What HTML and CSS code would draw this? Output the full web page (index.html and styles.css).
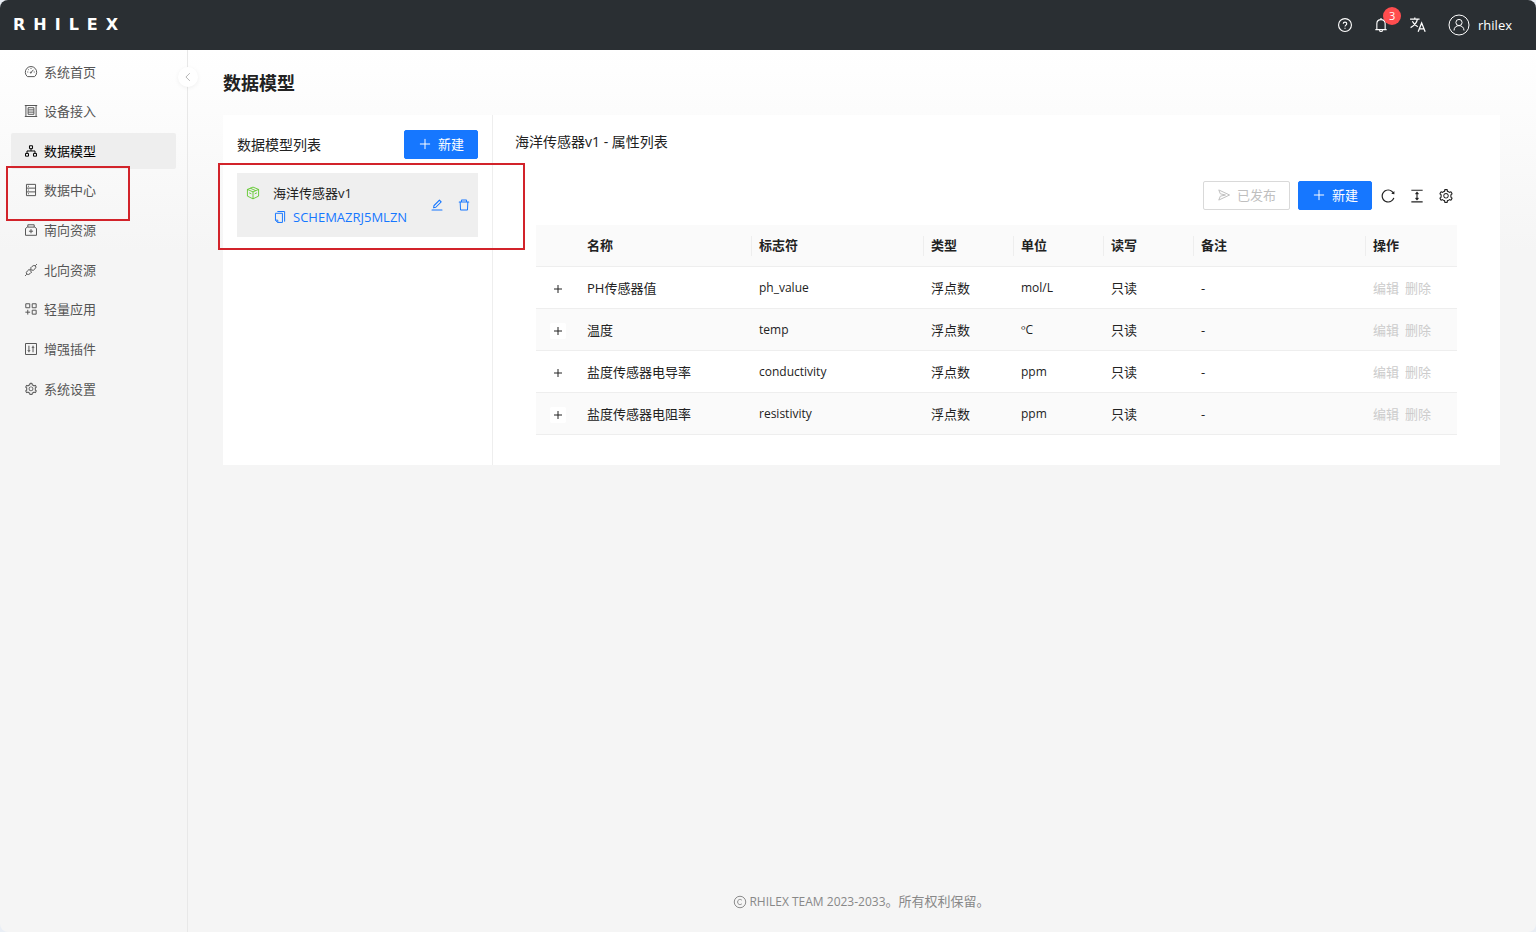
FILE: index.html
```html
<!DOCTYPE html>
<html lang="zh-CN">
<head>
<meta charset="utf-8">
<title>数据模型 - RHILEX</title>
<link rel="stylesheet" href="styles.css">
</head>
<body>
<svg class="sprite" viewBox="0 0 1024 1024" aria-hidden="true">
  <symbol id="gear" viewBox="0 0 1024 1024"><path fill="currentColor" stroke="none" d="M924.8 625.7l-65.5-56c3.1-19 4.7-38.4 4.7-57.8s-1.6-38.8-4.7-57.8l65.5-56a32.03 32.03 0 009.3-35.2l-.9-2.6a443.74 443.74 0 00-79.7-137.9l-1.8-2.1a32.12 32.12 0 00-35.1-9.5l-81.3 28.9c-30-24.6-63.5-44-99.7-57.6l-15.7-85a32.05 32.05 0 00-25.8-25.7l-2.7-.5c-52.1-9.4-106.9-9.4-159 0l-2.7.5a32.05 32.05 0 00-25.8 25.7l-15.8 85.4a351.86 351.86 0 00-99 57.4l-81.9-29.1a32 32 0 00-35.1 9.5l-1.8 2.1a446.02 446.02 0 00-79.7 137.9l-.9 2.6c-4.5 12.5-.8 26.5 9.3 35.2l66.3 56.6c-3.1 18.8-4.6 38-4.6 57.1 0 19.2 1.5 38.4 4.6 57.1L99 625.5a32.03 32.03 0 00-9.3 35.2l.9 2.6c18.1 50.4 44.9 96.9 79.7 137.9l1.8 2.1a32.12 32.12 0 0035.1 9.5l81.9-29.1c29.8 24.5 63.1 43.9 99 57.4l15.8 85.4a32.05 32.05 0 0025.8 25.7l2.7.5a449.4 449.4 0 00159 0l2.7-.5a32.05 32.05 0 0025.8-25.7l15.7-85a350 350 0 0099.7-57.6l81.3 28.9a32 32 0 0035.1-9.5l1.8-2.1c34.8-41.1 61.6-87.5 79.7-137.9l.9-2.6c4.5-12.3.8-26.3-9.3-35zM788.3 465.9c2.5 15.1 3.8 30.6 3.8 46.1s-1.3 31-3.8 46.1l-6.6 40.1 74.7 63.9a370.03 370.03 0 01-42.6 73.6L721 702.8l-31.4 25.8c-23.9 19.6-50.5 35-79.3 45.8l-38.1 14.3-17.9 97a377.5 377.5 0 01-85 0l-17.9-97.2-37.8-14.5c-28.5-10.8-55-26.2-78.7-45.7l-31.4-25.9-93.4 33.2c-17-22.9-31.2-47.6-42.6-73.6l75.5-64.5-6.5-40c-2.4-14.9-3.7-30.3-3.7-45.5 0-15.3 1.2-30.6 3.7-45.5l6.5-40-75.5-64.5c11.3-26.1 25.6-50.7 42.6-73.6l93.4 33.2 31.4-25.9c23.7-19.5 50.2-34.9 78.7-45.7l37.9-14.3 17.9-97.2c28.1-3.2 56.8-3.2 85 0l17.9 97 38.1 14.3c28.7 10.8 55.4 26.2 79.3 45.8l31.4 25.8 92.8-32.9c17 22.9 31.2 47.6 42.6 73.6L781.8 426l6.5 39.9zM512 326c-97.2 0-176 78.8-176 176s78.8 176 176 176 176-78.8 176-176-78.8-176-176-176zm79.2 255.2A111.6 111.6 0 01512 614c-29.9 0-58-11.7-79.2-32.8A111.6 111.6 0 01400 502c0-29.9 11.7-58 32.8-79.2C454 401.6 482.1 390 512 390c29.9 0 58 11.6 79.2 32.8A111.6 111.6 0 01624 502c0 29.9-11.7 58-32.8 79.2z"/></symbol>
  <symbol id="plus" viewBox="0 0 1024 1024"><path d="M512 140V884M140 512H884"/></symbol>
</svg>

<div class="app">
  <header class="topbar">
    <a class="brand" href="#">RHILEX</a>
    <div class="tools">
      <button class="tool" aria-label="帮助"><svg class="icon i16" viewBox="0 0 1024 1024"><circle cx="512" cy="512" r="412"/><path d="M400 430c0-140 224-140 224 0c0 90-112 90-112 180M512 680v70"/></svg></button>
      <button class="tool bell" aria-label="通知"><svg class="icon i16" viewBox="0 0 1024 1024"><path d="M512 70v90M246 800V430c0-350 532-350 532 0v370M150 805H874M420 840c0 120 184 120 184 0"/></svg><span class="badge">3</span></button>
      <button class="tool" aria-label="语言"><svg class="icon i18" viewBox="0 0 1024 1024"><path d="M60 180H600M330 80v100M480 180C440 380 290 560 90 660M190 300C270 460 370 560 500 610M520 900L720 400L920 900M590 730H850"/></svg></button>
      <button class="tool user"><svg class="icon avatar" viewBox="0 0 22 22"><circle cx="11" cy="11" r="10"/><circle cx="11" cy="8.5" r="3.1"/><path d="M6 16.5c0-6.5 10-6.5 10 0"/></svg><span>rhilex</span></button>
    </div>
  </header>

  <div class="body">
    <aside class="sidebar">
      <nav class="menu">
        <a href="#"><svg class="icon i14" viewBox="0 0 1024 1024"><path d="M250 850A415 415 0 1 1 774 850ZM512 220v70M240 512h70M714 512h70M310 320l50 50M500 560L690 350"/><circle cx="500" cy="560" r="40"/></svg>系统首页</a>
        <a href="#"><svg class="icon i14" viewBox="0 0 1024 1024"><path d="M60 110H964M60 914H964M140 110V914M884 110V914M300 270H724V754H300ZM300 430H724M300 594H724"/></svg>设备接入</a>
        <a href="#" class="active"><svg class="icon i14" viewBox="0 0 1024 1024"><path d="M400 130H624V340H400ZM110 690H330V890H110ZM694 690H914V890H694ZM512 340V500M220 690V510H804V690"/></svg>数据模型</a>
        <a href="#"><svg class="icon i14" viewBox="0 0 1024 1024"><path d="M180 100H844V924H180ZM180 375H844M180 650H844M290 240h70M290 515h70M290 785h70"/></svg>数据中心</a>
        <a href="#"><svg class="icon i14" viewBox="0 0 1024 1024"><path d="M110 900V400L240 300H784L914 400V900ZM280 300V130H744V300M512 450V750M362 600H662"/></svg>南向资源</a>
        <a href="#"><svg class="icon i14" viewBox="0 0 1024 1024"><path d="M80 944L200 824M824 200L944 80M470 370L590 250Q720 120 850 220Q910 350 780 440L660 560ZM370 470L560 660L440 780Q310 900 190 800Q120 700 240 590ZM420 520L500 440M510 610L590 530"/></svg>北向资源</a>
        <a href="#"><svg class="icon i14" viewBox="0 0 1024 1024"><path d="M130 130H420V420H130ZM600 130H890V420H600ZM600 600H890V890H600ZM275 570V920M100 745H450"/></svg>轻量应用</a>
        <a href="#"><svg class="icon i14" viewBox="0 0 1024 1024"><path d="M110 110H914V914H110ZM360 270V750M270 590L360 680L450 590M660 270V750M570 440L660 350L750 440"/></svg>增强插件</a>
        <a href="#"><svg class="icon i14" viewBox="0 0 1024 1024"><use href="#gear"/></svg>系统设置</a>
      </nav>
      <button class="collapse" aria-label="收起菜单"><svg class="icon i10" viewBox="0 0 1024 1024"><path d="M700 120L300 512L700 904"/></svg></button>
    </aside>

    <main class="content">
      <h1>数据模型</h1>
      <div class="panels">
        <section class="models">
          <div class="models-head">
            <h2>数据模型列表</h2>
            <button class="btn primary"><svg class="icon i14" viewBox="0 0 1024 1024"><use href="#plus"/></svg>新建</button>
          </div>
          <div class="model">
            <svg class="icon i14 cube" viewBox="0 0 1024 1024"><path d="M512 80L920 250V740L512 940L104 740V250ZM104 250L512 430L920 250M512 430V940M310 160L710 340M230 500L390 570M640 570L800 500"/></svg>
            <div class="model-text">
              <span>海洋传感器v1</span>
              <button class="link"><svg class="icon i14" viewBox="0 0 1024 1024"><path d="M320 110H850V850M180 240H690V910H340L180 760ZM180 740H350V910"/></svg>SCHEMAZRJ5MLZN</button>
            </div>
            <div class="model-actions">
              <button class="link" aria-label="编辑模型"><svg class="icon i14" viewBox="0 0 1024 1024"><path class="solid" d="M257.7 752c2 0 4-.2 6-.5L431.9 722c2-.4 3.9-1.3 5.3-2.8l423.9-423.9a9.96 9.96 0 000-14.1L694.9 114.9c-1.9-1.9-4.4-2.9-7.1-2.9s-5.2 1-7.1 2.9L256.8 538.8c-1.5 1.5-2.4 3.3-2.8 5.3l-29.5 168.2a33.5 33.5 0 009.4 29.8c6.6 6.4 14.9 9.9 23.8 9.9zm67.4-174.4L687.8 215l73.3 73.3-362.7 362.6-88.9 15.7 15.6-89zM880 836H144c-17.7 0-32 14.3-32 32v36c0 4.4 3.6 8 8 8h784c4.4 0 8-3.6 8-8v-36c0-17.7-14.3-32-32-32z"/></svg></button>
              <button class="link" aria-label="删除模型"><svg class="icon i14" viewBox="0 0 1024 1024"><path class="solid" d="M360 184h304v72h72v-80c0-35.3-28.7-64-64-64H352c-35.3 0-64 28.7-64 64v80h72v-72zm504 72H160c-17.7 0-32 14.3-32 32v32c0 4.4 3.6 8 8 8h60.4l24.7 523c1.6 34.1 29.8 61 63.9 61h454c34.2 0 62.3-26.8 63.9-61l24.7-523H888c4.4 0 8-3.6 8-8v-32c0-17.7-14.3-32-32-32zM731.3 840H292.7l-24.2-512h487l-24.2 512z"/></svg></button>
            </div>
          </div>
        </section>

        <section class="props">
          <h2>海洋传感器v1 - 属性列表</h2>
          <div class="toolbar">
            <button class="btn" disabled><svg class="icon i14" viewBox="0 0 1024 1024"><path d="M130 140L920 512L130 884L240 600L620 512L240 424Z"/></svg>已发布</button>
            <button class="btn primary"><svg class="icon i14" viewBox="0 0 1024 1024"><use href="#plus"/></svg>新建</button>
            <button class="tool-dark" aria-label="刷新"><svg class="icon i16" viewBox="0 0 1024 1024"><path class="solid" d="M909.1 209.3l-56.4 44.1C775.8 155.1 656.2 92 521.9 92 290 92 102.3 279.5 102 511.5 101.7 743.7 289.8 932 521.9 932c181.3 0 335.8-115 394.6-276.1 1.5-4.2-.7-8.9-4.9-10.3l-56.7-19.5a8 8 0 00-10.1 4.8c-1.8 5-3.8 10-5.9 14.9-17.3 41-42.1 77.8-73.7 109.4A344.77 344.77 0 01655.9 829c-42.3 17.9-87.4 27-133.8 27-46.5 0-91.5-9.1-133.8-27A341.5 341.5 0 01279 755.2a342.16 342.16 0 01-73.7-109.4c-17.9-42.4-27-87.4-27-133.9s9.1-91.5 27-133.9c17.3-41 42.1-77.8 73.7-109.4 31.6-31.6 68.4-56.4 109.3-73.8 42.3-17.9 87.4-27 133.8-27 46.5 0 91.5 9.1 133.8 27a341.5 341.5 0 01109.3 73.8c9.9 9.9 19.2 20.4 27.8 31.4l-60.2 47a8 8 0 003 14.1l175.6 43c5 1.2 9.9-2.6 9.9-7.7l.8-180.9c-.1-6.6-7.8-10.3-13-6.2z"/></svg></button>
            <button class="tool-dark" aria-label="密度"><svg class="icon i16" viewBox="0 0 1024 1024"><path d="M150 140H874M150 884H874M512 300V724M420 385L512 285L604 385M420 640L512 740L604 640"/></svg></button>
            <button class="tool-dark" aria-label="列设置"><svg class="icon i16" viewBox="0 0 1024 1024"><use href="#gear"/></svg></button>
          </div>
          <table>
            <colgroup><col class="c-exp"><col><col><col class="c-s"><col class="c-s"><col class="c-s"><col><col class="c-op"></colgroup>
            <thead>
              <tr><th></th><th>名称</th><th>标志符</th><th>类型</th><th>单位</th><th>读写</th><th>备注</th><th>操作</th></tr>
            </thead>
            <tbody>
              <tr><td><button class="expand" aria-label="展开"><svg class="icon i10" viewBox="0 0 10 10"><path d="M5 1V9M1 5H9"/></svg></button></td><td>PH传感器值</td><td class="latin">ph_value</td><td>浮点数</td><td class="latin">mol/L</td><td>只读</td><td>-</td><td><button class="off" disabled>编辑</button><button class="off" disabled>删除</button></td></tr>
              <tr><td><button class="expand" aria-label="展开"><svg class="icon i10" viewBox="0 0 10 10"><path d="M5 1V9M1 5H9"/></svg></button></td><td>温度</td><td class="latin">temp</td><td>浮点数</td><td class="latin">ºC</td><td>只读</td><td>-</td><td><button class="off" disabled>编辑</button><button class="off" disabled>删除</button></td></tr>
              <tr><td><button class="expand" aria-label="展开"><svg class="icon i10" viewBox="0 0 10 10"><path d="M5 1V9M1 5H9"/></svg></button></td><td>盐度传感器电导率</td><td class="latin">conductivity</td><td>浮点数</td><td class="latin">ppm</td><td>只读</td><td>-</td><td><button class="off" disabled>编辑</button><button class="off" disabled>删除</button></td></tr>
              <tr><td><button class="expand" aria-label="展开"><svg class="icon i10" viewBox="0 0 10 10"><path d="M5 1V9M1 5H9"/></svg></button></td><td>盐度传感器电阻率</td><td class="latin">resistivity</td><td>浮点数</td><td class="latin">ppm</td><td>只读</td><td>-</td><td><button class="off" disabled>编辑</button><button class="off" disabled>删除</button></td></tr>
            </tbody>
          </table>
        </section>
      </div>
      <footer><svg class="icon i14" viewBox="0 0 1024 1024"><circle cx="512" cy="512" r="420"/><path d="M650 390C560 270 340 310 340 512S560 754 650 634"/></svg><span><span class="latin">RHILEX TEAM 2023-2033</span>。所有权利保留。</span></footer>
    </main>
  </div>
  <div class="mark mark-menu"></div>
  <div class="mark mark-model"></div>
</div>
</body>
</html>
```

FILE: styles.css
```css
* { box-sizing: border-box; }
body {
  margin: 0;
  background: #e9eef5;
  color: #222;
  font: 13px/20px "Open Sans", "Noto Sans CJK SC", sans-serif;
}
h1, h2 { margin: 0; }
h2 { font-size: 14px; font-weight: 400; line-height: 20px; }
a { color: inherit; text-decoration: none; }
button {
  margin: 0;
  padding: 0;
  border: 0;
  background: none;
  color: inherit;
  font: inherit;
}
.sprite { position: absolute; width: 0; height: 0; }
.icon {
  flex: none;
  display: block;
  fill: none;
  stroke: currentColor;
  stroke-width: 72;
}
.solid { fill: currentColor; stroke: none; }
.i10 { width: 10px; height: 10px; }
.i14 { width: 14px; height: 14px; }
.i16 { width: 16px; height: 16px; }
.i18 { width: 18px; height: 18px; }
.latin { font-size: 12px; }

.app {
  position: relative;
  display: flex;
  flex-direction: column;
  min-height: 100vh;
  border-radius: 8px;
  overflow: hidden;
  background: #f5f5f5 linear-gradient(#fff, #f5f5f5) 0 50px / 100% 200px no-repeat;
}
.topbar {
  display: flex;
  align-items: center;
  justify-content: space-between;
  height: 50px;
  padding: 0 24px 0 13px;
  background: #2a2f33;
  color: #fff;
}
.brand {
  font-family: "DejaVu Sans", sans-serif;
  font-size: 16px;
  font-weight: 700;
  letter-spacing: 8px;
}
.tools { display: flex; align-items: center; gap: 20px; }
.tool { position: relative; display: flex; align-items: center; gap: 8px; }
.user { margin-left: 1px; }
.avatar { width: 22px; height: 22px; stroke-width: 1; }
.badge {
  position: absolute;
  left: 10px;
  bottom: 8px;
  width: 18px;
  height: 18px;
  border-radius: 9px;
  background: #ff4d4f;
  font-size: 11px;
  line-height: 18px;
  text-align: center;
}

.body { flex: 1; display: flex; }
.sidebar {
  position: relative;
  width: 188px;
  padding: 4px 11px;
  border-right: 1px solid #e8e8e8;
  color: #555;
}
.menu {
  display: grid;
  grid-auto-rows: 36px;
  align-content: space-between;
  min-height: 353px;
}
.menu a {
  display: flex;
  align-items: center;
  gap: 6px;
  padding: 0 13px 1px;
  border-radius: 2px;
}
.menu .active { background: #eee; color: #000; }
.collapse {
  position: absolute;
  top: 17px;
  right: -11px;
  display: grid;
  place-items: center;
  width: 20px;
  height: 20px;
  border-radius: 50%;
  background: #fff;
  box-shadow: 0 1px 4px #0000000f;
  color: #999;
}

.content {
  flex: 1;
  min-width: 0;
  display: flex;
  flex-direction: column;
  padding: 19px 36px 20px 35px;
}
h1 { font-size: 18px; line-height: 28px; font-weight: 700; }
.panels {
  display: flex;
  min-height: 350px;
  margin-top: 18px;
  background: #fff;
}
.models {
  width: 270px;
  padding: 15px 14px;
  border-right: 1px solid #eee;
}
.models-head { display: flex; align-items: center; justify-content: space-between; }
.btn {
  display: flex;
  align-items: center;
  gap: 6px;
  height: 29px;
  padding: 0 13px 1px;
  border: 1px solid #d9d9d9;
  border-radius: 2px;
  background: #fff;
}
.btn:disabled { color: #bfbfbf; }
.btn.primary { border-color: #1677ff; background: #1677ff; color: #fff; }
.model {
  display: flex;
  margin-top: 14px;
  padding: 9px 7px 9px 9px;
  background: #efefef;
}
.cube { margin: 4px 13px 0 0; color: #52c41a; stroke-width: 60; }
.model-text { flex: 1; display: flex; flex-direction: column; gap: 2px; line-height: 22px; }
.link { display: flex; align-items: center; gap: 6px; color: #1677ff; }
.model-actions { display: flex; gap: 13px; }

.props { flex: 1; min-width: 0; padding: 17px 43px 28px 22px; }
.toolbar {
  display: flex;
  align-items: center;
  justify-content: flex-end;
  gap: 8px;
  margin-top: 29px;
}
.tool-dark { margin-right: 5px; color: #222; }
.tool-dark:last-child { margin-right: 3px; }
table {
  width: calc(100% - 21px);
  margin: 15px 0 0 21px;
  border-collapse: separate;
  border-spacing: 0;
  table-layout: fixed;
}
.c-exp { width: 43px; }
.c-s { width: 90px; }
.c-op { width: 92px; }
th, td {
  position: relative;
  height: 42px;
  padding: 0 8px;
  border-bottom: 1px solid #eee;
  text-align: left;
}
th { padding-bottom: 2px; background: #fafafa; font-weight: 700; }
th:nth-child(n+3)::before {
  content: "";
  position: absolute;
  left: 0;
  top: 11px;
  width: 1px;
  height: 20px;
  background: #eee;
}
tbody tr:nth-child(even) td { background: #fafafa; }
.expand {
  display: grid;
  place-items: center;
  width: 16px;
  height: 16px;
  margin: 2px auto 0;
  border-radius: 2px;
  background: #fff;
}
.expand .icon { stroke-width: 1; }
.off { color: #ccc; }
.off + .off { margin-left: 6px; }

footer {
  display: flex;
  align-items: center;
  justify-content: center;
  gap: 2px;
  margin-top: auto;
  color: #888;
}

.mark { position: absolute; border: 2px solid #d2232a; pointer-events: none; }
.mark-menu { left: 6px; top: 166px; width: 124px; height: 55px; }
.mark-model { left: 218px; top: 163px; width: 307px; height: 87px; }
```
